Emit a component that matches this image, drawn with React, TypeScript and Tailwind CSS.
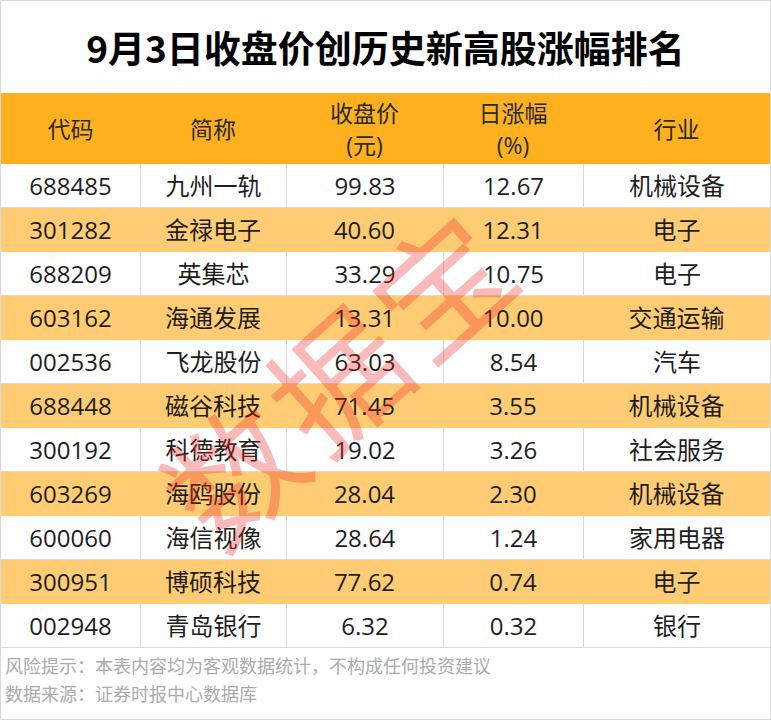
import React from "react";

const rows: [string, string, string, string, string][] = [
  ["688485", "九州一轨", "99.83", "12.67", "机械设备"],
  ["301282", "金禄电子", "40.60", "12.31", "电子"],
  ["688209", "英集芯", "33.29", "10.75", "电子"],
  ["603162", "海通发展", "13.31", "10.00", "交通运输"],
  ["002536", "飞龙股份", "63.03", "8.54", "汽车"],
  ["688448", "磁谷科技", "71.45", "3.55", "机械设备"],
  ["300192", "科德教育", "19.02", "3.26", "社会服务"],
  ["603269", "海鸥股份", "28.04", "2.30", "机械设备"],
  ["600060", "海信视像", "28.64", "1.24", "家用电器"],
  ["300951", "博硕科技", "77.62", "0.74", "电子"],
  ["002948", "青岛银行", "6.32", "0.32", "银行"],
];

const font = "font-['Open_Sans','Noto_Sans_CJK_SC',sans-serif]";

export default function App() {
  return (
    <div className={`relative w-[771px] h-[720px] bg-white border border-[#d9d9d9] overflow-hidden ${font}`}>
      <div className="h-[92px] flex items-center justify-center">
        <h1 className="text-[37px] font-bold text-black font-['Noto_Sans_CJK_SC',sans-serif] leading-none pt-[1px]">
          9月3日收盘价创历史新高股涨幅排名
        </h1>
      </div>

      <div className="grid grid-cols-[139px_146px_157px_140px_1fr] h-[71px] bg-[#ffb01f] text-[#2a2a2a] text-[23px] leading-[32px]">
        <div className="flex items-center justify-center">代码</div>
        <div className="flex items-center justify-center">简称</div>
        <div className="flex flex-col items-center justify-center">
          <span>收盘价</span>
          <span>(元)</span>
        </div>
        <div className="flex flex-col items-center justify-center">
          <span>日涨幅</span>
          <span>(%)</span>
        </div>
        <div className="flex items-center justify-center">行业</div>
      </div>

      {rows.map((r, i) => {
        const striped = i % 2 === 1;
        return (
          <div
            key={r[0]}
            className={`grid grid-cols-[139px_146px_157px_140px_1fr] h-[44px] text-[24px] text-[#1e1e1e] ${
              striped ? "bg-[#ffcc73]" : "bg-white border-b border-[#dcdcdc]"
            }`}
          >
            {r.map((c, j) => (
              <div
                key={j}
                className={`flex items-center justify-center ${
                  j > 0 && !striped ? "border-l border-[#d9d9d9]" : ""
                }`}
              >
                {c}
              </div>
            ))}
          </div>
        );
      })}

      <div className="pt-[4px] pl-[4px] text-[18px] leading-[28px] text-[#ababab]">
        <div>风险提示：本表内容均为客观数据统计，不构成任何投资建议</div>
        <div>数据来源：证券时报中心数据库</div>
      </div>

      <div className="pointer-events-none absolute left-[336px] top-[372px] -translate-x-1/2 -translate-y-1/2 -rotate-[42deg] whitespace-nowrap text-[132px] leading-none text-[rgba(240,40,40,0.32)] font-['Noto_Sans_CJK_SC',sans-serif] tracking-[8px]">
        数据宝
      </div>
    </div>
  );
}
